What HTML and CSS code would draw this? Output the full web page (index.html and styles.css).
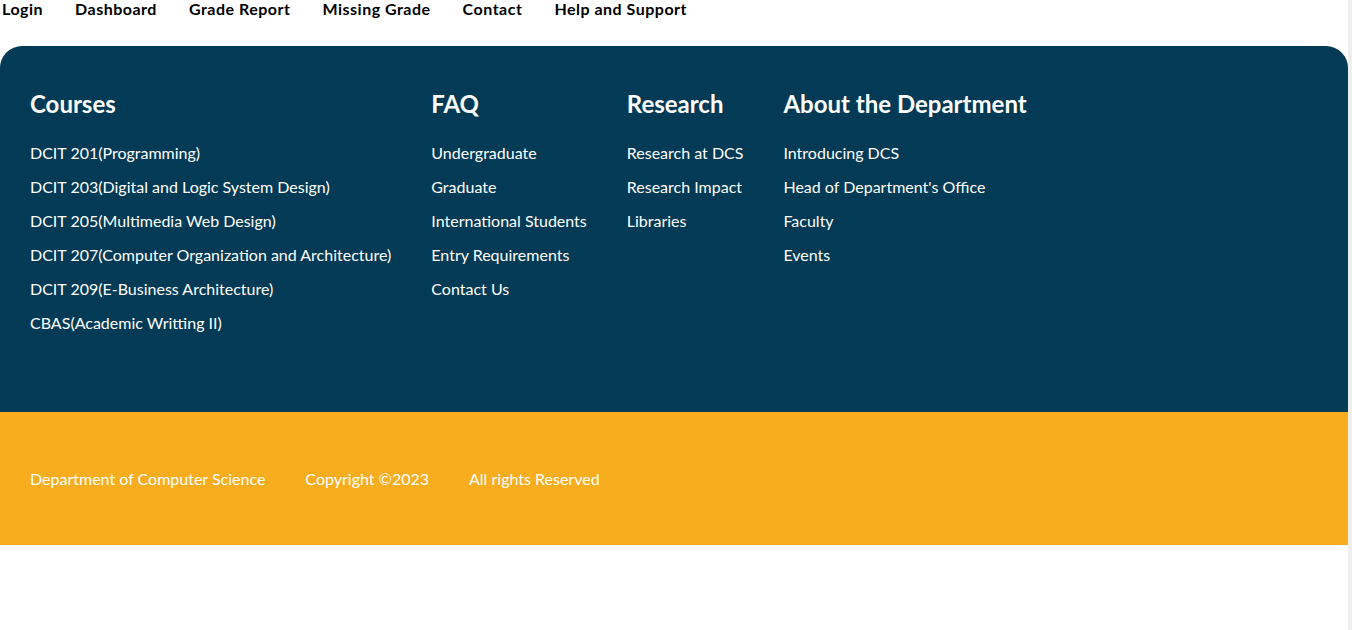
FILE: index.html
```html
<!DOCTYPE html>
<html lang="en">
<head>
<meta charset="utf-8">
<title>DCS</title>
<link rel="stylesheet" href="styles.css">
</head>
<body>
<nav class="topnav">
  <a href="#">Login</a>
  <a href="#">Dashboard</a>
  <a href="#">Grade Report</a>
  <a href="#">Missing Grade</a>
  <a href="#">Contact</a>
  <a href="#">Help and Support</a>
</nav>
<footer class="footer">
  <div class="footer-main">
    <div class="col">
      <h2>Courses</h2>
      <ul>
        <li>DCIT 201(Programming)</li>
        <li>DCIT 203(Digital and Logic System Design)</li>
        <li>DCIT 205(Multimedia Web Design)</li>
        <li>DCIT 207(Computer Organization and Architecture)</li>
        <li>DCIT 209(E-Business Architecture)</li>
        <li>CBAS(Academic Writting II)</li>
      </ul>
    </div>
    <div class="col">
      <h2>FAQ</h2>
      <ul>
        <li>Undergraduate</li>
        <li>Graduate</li>
        <li>International Students</li>
        <li>Entry Requirements</li>
        <li>Contact Us</li>
      </ul>
    </div>
    <div class="col">
      <h2>Research</h2>
      <ul>
        <li>Research at DCS</li>
        <li>Research Impact</li>
        <li>Libraries</li>
      </ul>
    </div>
    <div class="col">
      <h2>About the Department</h2>
      <ul>
        <li>Introducing DCS</li>
        <li>Head of Department's Office</li>
        <li>Faculty</li>
        <li>Events</li>
      </ul>
    </div>
  </div>
  <div class="footer-bottom">
    <span>Department of Computer Science</span>
    <span>Copyright ©2023</span>
    <span>All rights Reserved</span>
  </div>
</footer>
</body>
</html>
```
FILE: styles.css
```css
html, body {
  margin: 0;
  padding: 0;
}
body {
  font-family: "Lato", "Open Sans", sans-serif;
  background: #ffffff;
  border-right: 4px solid #eeeeee;
  min-height: 630px;
  box-sizing: border-box;
}
.topnav {
  display: flex;
  gap: 32px;
  padding: 0 0 0 2px;
  height: 46px;
  box-sizing: border-box;
}
.topnav a {
  color: #000;
  text-decoration: none;
  font-weight: 700;
  font-size: 16px;
  letter-spacing: 0.5px;
  line-height: 18px;
}
.footer-main {
  background: #033a55;
  border-radius: 22px 22px 0 0;
  display: flex;
  gap: 40px;
  padding: 41px 30px 0 30px;
  height: 366px;
  box-sizing: border-box;
}
.col h2 {
  color: #fff;
  font-size: 24px;
  font-weight: 700;
  margin: 0;
  line-height: 34px;
}
.col ul {
  list-style: none;
  margin: 22px 0 0 0;
  padding: 0;
}
.col li {
  color: #fff;
  font-size: 16px;
  line-height: 20px;
  margin-bottom: 14px;
}
.col li:last-child {
  margin-bottom: 0;
}
.footer-bottom {
  background: #f7ad1d;
  height: 133px;
  display: flex;
  align-items: center;
  gap: 40px;
  padding: 0 30px;
}
.footer-bottom span {
  color: #fff;
  font-size: 16px;
}
```
